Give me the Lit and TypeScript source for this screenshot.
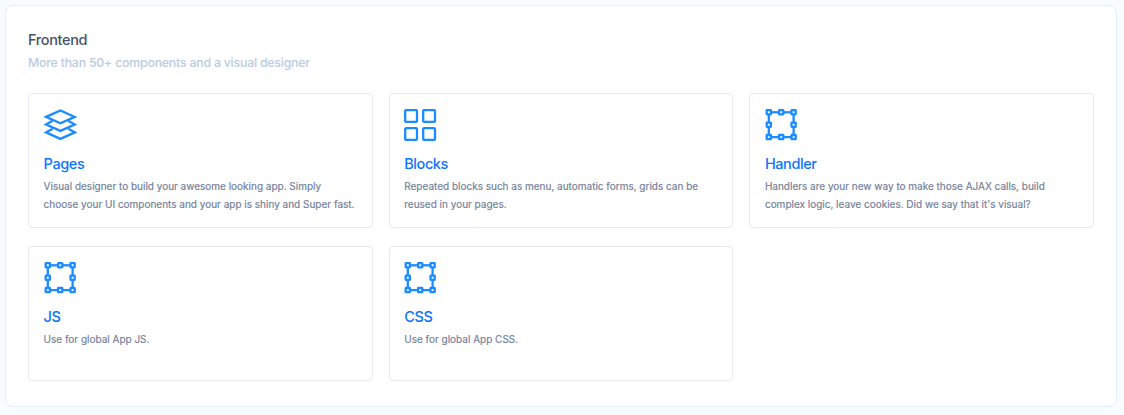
import { LitElement, html, css, svg } from "lit";
import { customElement } from "lit/decorators.js";

const handles = [[3.8, 3.3], [16.2, 3.3], [28.6, 3.3], [3.8, 15.7], [28.6, 15.7], [3.8, 28.1], [16.2, 28.1], [28.6, 28.1]];

const icons: Record<string, unknown> = {
  layers: svg`<path d="M2 7.9 16.4 1.4 30.8 7.9 16.4 14.2Z"/><path d="M8.6 11.8 2 15.5 16.4 21.9 30.8 15.5 24.2 11.8"/><path d="M8.6 19.7 2 23.4 16.4 29.9 30.8 23.4 24.2 19.7"/>`,
  grid: svg`${[[1.2, 1.1], [19.2, 1.1], [1.2, 19.1], [19.2, 19.1]].map(([x, y]) => svg`<rect x=${x} y=${y} width="11.8" height="11.8" rx="1"/>`)}`,
  frame: svg`<rect x="3.8" y="3.3" width="24.8" height="24.8"/>${handles.map(([x, y]) => svg`<rect x=${x - 2.1} y=${y - 2.1} width="4.2" height="4.2" rx=".3" fill="#fff"/>`)}`,
};

const cards = [
  ["layers", "Pages", "Visual designer to build your awesome looking app. Simply", "choose your UI components and your app is shiny and Super fast."],
  ["grid", "Blocks", "Repeated blocks such as menu, automatic forms, grids can be", "reused in your pages."],
  ["frame", "Handler", "Handlers are your new way to make those AJAX calls, build", "complex logic, leave cookies. Did we say that it's visual?"],
  ["frame", "JS", "Use for global App JS.", ""],
  ["frame", "CSS", "Use for global App CSS.", ""],
];

@customElement("app-root")
export class AppRoot extends LitElement {
  static styles = css`
    :host { display: block; box-sizing: border-box; height: 415px; padding: 5px 7px 8px 5px; background: #f8fcff; font-family: Inter, sans-serif; }
    * { box-sizing: border-box; }
    .panel { height: 402px; background: #fff; border: 1px solid #e1effd; border-radius: 8px; padding: 24px 22px; }
    h1 { margin: 0; font-size: 14.5px; line-height: 20px; font-weight: 500; letter-spacing: -0.36px; color: #475264; }
    .sub { margin: 3px 0 0; font-size: 12.3px; line-height: 20px; font-weight: 500; letter-spacing: -0.2px; color: #bccae2; }
    .cards { margin-top: 20px; display: grid; grid-template-columns: repeat(3, 1fr); grid-auto-rows: 135px; gap: 18px 16px; }
    .card { border: 1px solid #e6e9f1; border-radius: 4px; padding: 15px 14.6px; }
    svg { display: block; width: 33px; height: 33px; fill: none; stroke: #1b8cff; stroke-width: 2.3; }
    h2 { margin: 11px 0 0; font-size: 14.5px; line-height: 22px; font-weight: 500; letter-spacing: -0.42px; color: #0a74ff; }
    .text { margin: 2px 0 0; font-size: 10px; line-height: 18px; letter-spacing: -0.005px; color: #717d98; -webkit-text-stroke: 0.15px #717d98; white-space: nowrap; }
  `;
  render() {
    return html`<section class="panel"><h1>Frontend</h1><p class="sub">More than 50+ components and a visual designer</p>
      <div class="cards">${cards.map(([icon, title, a, b]) => html`<article class="card"><svg viewBox="0 0 33 33">${icons[icon]}</svg><h2>${title}</h2><p class="text">${a}<br />${b}</p></article>`)}</div></section>`;
  }
}
